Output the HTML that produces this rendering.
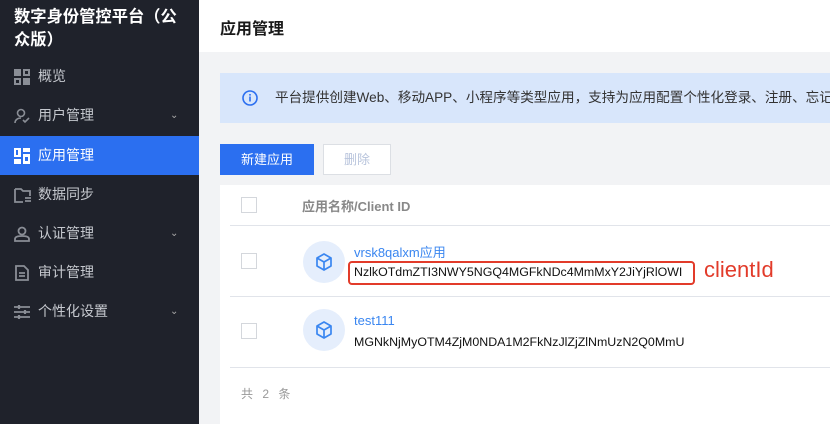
<!DOCTYPE html>
<html><head><meta charset="utf-8"><style>
*{margin:0;padding:0;box-sizing:border-box}
body{width:830px;height:424px;overflow:hidden;font-family:"Liberation Sans","Noto Sans CJK SC",sans-serif;background:#f2f3f5;position:relative}
.sb{position:absolute;left:0;top:0;width:199px;height:424px;background:#1f222b}
.title{position:absolute;left:14px;top:6px;width:168px;color:#fff;font-weight:bold;font-size:16.3px;line-height:23px}
.mi{position:absolute;left:0;width:199px;height:39px;color:#c5c8ce;font-size:14px;line-height:39px;padding-left:38px}
.mi.act{background:#2b6ff0;color:#fff}
.mi svg.ic{position:absolute;left:14px;top:12px}
.mi .ar{position:absolute;left:170px;top:0;font-size:10px;color:#aaa}
.hd{position:absolute;left:199px;top:0;width:631px;height:52px;background:#fff}
.hd span{position:absolute;left:21px;top:15px;font-size:16px;font-weight:bold;color:#1a1a1a}
.ban{position:absolute;left:220px;top:73px;width:610px;height:50px;background:#d8e6fb;font-size:13.6px;color:#333;line-height:50px;padding-left:55px;white-space:nowrap;overflow:hidden}
.ban svg{position:absolute;left:22px;top:17px}
.b1{position:absolute;left:220px;top:144px;width:94px;height:31px;background:#2b6ff0;color:#fff;font-size:13px;text-align:center;line-height:31px}
.b2{position:absolute;left:323px;top:144px;width:68px;height:31px;background:#fff;border:1px solid #dcdfe4;color:#b8c4dc;font-size:13px;text-align:center;line-height:29px}
.card{position:absolute;left:220px;top:185px;width:610px;height:239px;background:#fff}
.cb{position:absolute;width:16px;height:16px;border:1px solid #d4d7dc;background:#fff}
.ln{position:absolute;left:10px;width:600px;height:1px;background:#e1e4ea}
.th{position:absolute;left:82px;top:11px;font-size:13px;color:#888;font-weight:bold}
.av{position:absolute;left:83px;width:42px;height:42px;border-radius:50%;background:#e5eefc}
.av svg{position:absolute;left:11px;top:11px}
.nm{position:absolute;left:134px;font-size:13px;color:#3a86f0}
.id{position:absolute;left:134px;font-size:12.4px;color:#111}
</style></head><body>
<div class="sb">
<div class="title">数字身份管控平台（公众版）</div>
<div class="mi" style="top:57px"><svg class="ic" width="16" height="16" viewBox="0 0 16 16" fill="#8a8e96"><rect x="0" y="0" width="7" height="7"/><rect x="9" y="0" width="7" height="7"/><rect x="0" y="9" width="7" height="7"/><rect x="9" y="9" width="7" height="7"/><rect x="2" y="11" width="3" height="3" fill="#1f222b"/><rect x="11" y="2" width="3" height="3" fill="#1f222b"/></svg>概览</div>
<div class="mi" style="top:96px"><svg class="ic" width="16" height="16" viewBox="0 0 16 16" fill="none" stroke="#8a8e96" stroke-width="1.6"><circle cx="7" cy="5" r="3.5"/><path d="M1 15c0-3 2.5-5 6-5M9 12l2 2 4-4"/></svg>用户管理<span class="ar">⌄</span></div>
<div class="mi act" style="top:136px"><svg class="ic" width="16" height="16" viewBox="0 0 16 16" fill="#fff"><rect x="0" y="0" width="7" height="9"/><rect x="9" y="0" width="7" height="4"/><rect x="0" y="11" width="7" height="5"/><rect x="9" y="6" width="7" height="10"/><rect x="2" y="2" width="2" height="5" fill="#2b6ff0"/><rect x="11" y="9" width="3" height="4" fill="#2b6ff0"/></svg>应用管理</div>
<div class="mi" style="top:175px"><svg class="ic" width="17" height="16" viewBox="0 0 17 16" fill="none" stroke="#8a8e96" stroke-width="1.8"><path d="M1 2h6l2 2h7v5M1 2v13h8"/><path d="M11 11h6M11 14h6"/></svg>数据同步</div>
<div class="mi" style="top:214px"><svg class="ic" width="16" height="16" viewBox="0 0 16 16" fill="none" stroke="#8a8e96" stroke-width="1.8"><circle cx="8" cy="5" r="3.5"/><path d="M1 15v-2c0-2 2-3 7-3s7 1 7 3v2z"/></svg>认证管理<span class="ar">⌄</span></div>
<div class="mi" style="top:253px"><svg class="ic" width="16" height="16" viewBox="0 0 16 16" fill="none" stroke="#8a8e96" stroke-width="1.8"><path d="M2 1h8l4 4v10H2z"/><path d="M5 8h6M5 11h6"/></svg>审计管理</div>
<div class="mi" style="top:292px"><svg class="ic" width="16" height="16" viewBox="0 0 16 16" fill="none" stroke="#8a8e96" stroke-width="1.8"><path d="M0 3h16M0 8h16M0 13h16"/><path d="M5 1v4M11 6v4M5 11v4" stroke-width="2.2"/></svg>个性化设置<span class="ar">⌄</span></div>
</div>
<div class="hd"><span>应用管理</span></div>
<div class="ban"><svg width="16" height="16" viewBox="0 0 16 16"><circle cx="8" cy="8" r="7" fill="none" stroke="#2b6ff0" stroke-width="1.6"/><rect x="7.2" y="6.5" width="1.6" height="5" fill="#2b6ff0"/><rect x="7.2" y="4" width="1.6" height="1.6" fill="#2b6ff0"/></svg>平台提供创建Web、移动APP、小程序等类型应用，支持为应用配置个性化登录、注册、忘记密码、忘记密码</div>
<div class="b1">新建应用</div>
<div class="b2">删除</div>
<div class="card">
<div class="cb" style="left:21px;top:12px"></div>
<div class="th">应用名称/Client ID</div>
<div class="ln" style="top:40px"></div>
<div class="cb" style="left:21px;top:68px"></div>
<div class="av" style="top:56px"><svg width="20" height="20" viewBox="0 0 20 20" fill="none" stroke="#3a86f0" stroke-width="1.7" stroke-linejoin="round"><path d="M10 2l7 4v8l-7 4-7-4V6z"/><path d="M3 6l7 4 7-4M10 10v8"/></svg></div>
<div class="nm" style="top:57px">vrsk8qalxm应用</div>
<div style="position:absolute;left:128px;top:76px;width:347px;height:24px;border:2px solid #e23b2a;border-radius:4px"></div>
<div class="id" style="top:80px;left:134px">NzlkOTdmZTI3NWY5NGQ4MGFkNDc4MmMxY2JiYjRlOWI</div>
<div style="position:absolute;left:484px;top:72px;font-size:22px;color:#e23b2a">clientId</div>
<div class="ln" style="top:111px"></div>
<div class="cb" style="left:21px;top:138px"></div>
<div class="av" style="top:124px"><svg width="20" height="20" viewBox="0 0 20 20" fill="none" stroke="#3a86f0" stroke-width="1.7" stroke-linejoin="round"><path d="M10 2l7 4v8l-7 4-7-4V6z"/><path d="M3 6l7 4 7-4M10 10v8"/></svg></div>
<div class="nm" style="top:128px">test111</div>
<div class="id" style="top:150px">MGNkNjMyOTM4ZjM0NDA1M2FkNzJlZjZlNmUzN2Q0MmU</div>
<div class="ln" style="top:182px"></div>
<div style="position:absolute;left:21px;top:200px;font-size:12px;color:#999;letter-spacing:3px">共 2 条</div>
</div>
</body></html>
